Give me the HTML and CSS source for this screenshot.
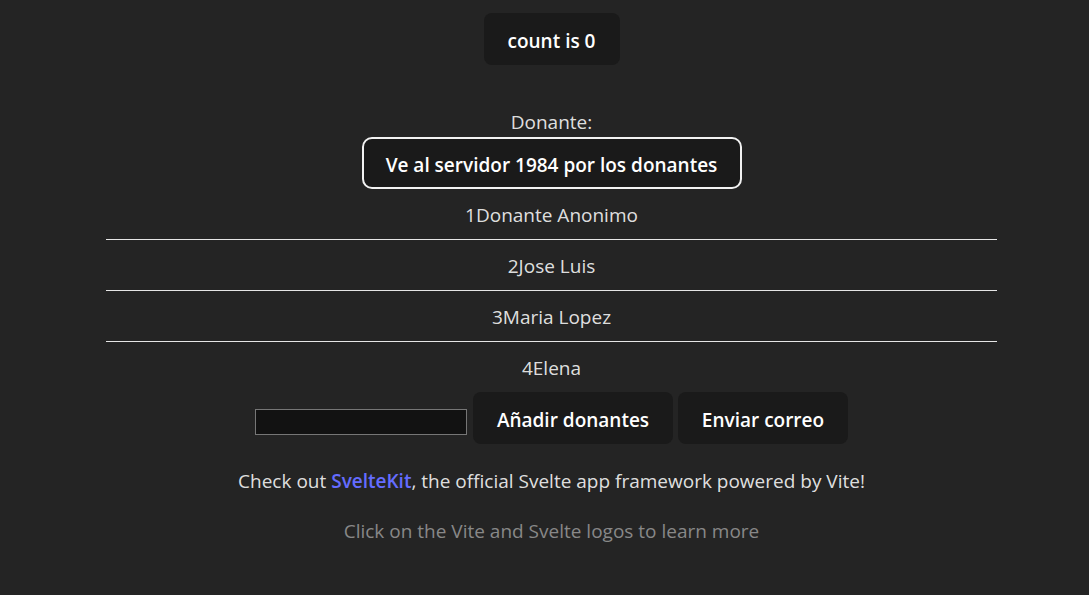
FILE: index.html
```html
<!DOCTYPE html>
<html lang="es">
<head>
<meta charset="utf-8">
<title>Donantes</title>
<link rel="stylesheet" href="styles.css">
</head>
<body>
<main class="app">
  <div class="card">
    <button class="btn count">count is 0</button>
  </div>
  <div class="donors">
    <p class="label">Donante:</p>
    <button class="btn outlined">Ve al servidor 1984 por los donantes</button>
    <ul class="list">
      <li class="item">1Donante Anonimo</li>
      <li class="sep"></li>
      <li class="item">2Jose Luis</li>
      <li class="sep"></li>
      <li class="item">3Maria Lopez</li>
      <li class="sep"></li>
      <li class="item">4Elena</li>
    </ul>
    <div class="add-row">
      <input class="field" type="text">
      <button class="btn">Añadir donantes</button>
      <button class="btn">Enviar correo</button>
    </div>
  </div>
  <p class="check">Check out <a class="kit" href="#">SvelteKit</a>, the official Svelte app framework powered by Vite!</p>
  <p class="read">Click on the Vite and Svelte logos to learn more</p>
</main>
</body>
</html>
```

FILE: styles.css
```css
html, body {
  margin: 0;
  background: #242424;
}
body {
  padding: 0 0 0 14px;
  font-family: "Open Sans", "Noto Sans", sans-serif;
  font-size: 19px;
  line-height: 24px;
  color: rgba(255, 255, 255, 0.87);
}
.app {
  width: 891px;
  margin: 0 auto;
  text-align: center;
}
.card {
  padding-top: 13px;
  display: flex;
  justify-content: center;
}
.btn {
  font-family: inherit;
  font-size: 19px;
  font-weight: 600;
  line-height: 24px;
  color: #fff;
  background: #1a1a1a;
  border: 1px solid transparent;
  border-radius: 8px;
  padding: 15px 0 11px;
  cursor: pointer;
}
.count {
  width: 136px;
}
.donors {
  margin-top: 45px;
  display: flex;
  flex-direction: column;
  align-items: center;
}
.label {
  margin: 0;
}
.outlined {
  margin-top: 3px;
  border: 2px solid #f2f2f2;
  border-radius: 10px;
  padding: 14px 0 10px;
  width: 380px;
}
.list {
  list-style: none;
  margin: 14px 0 0;
  padding: 0;
  width: 891px;
}
.item {
  height: 24px;
}
.sep {
  margin: 12px 0 14px;
  border-top: 1px solid #e6e6e6;
}
.add-row {
  margin-top: 12px;
  display: flex;
  align-items: flex-start;
  gap: 5px;
}
.field {
  box-sizing: border-box;
  margin: 17px 1px 0 0;
  width: 212px;
  height: 26px;
  background: #121212;
  border: 1px solid #767676;
  color: #fff;
  padding: 2px 4px;
}
.add-row .btn {
  width: 200px;
}
.add-row .btn:last-child {
  width: 170px;
}
.check {
  margin: 25px 0 0;
}
.kit {
  color: #646cff;
  font-weight: 600;
  text-decoration: none;
}
.read {
  margin: 26px 0 0;
  color: #888;
}
```
